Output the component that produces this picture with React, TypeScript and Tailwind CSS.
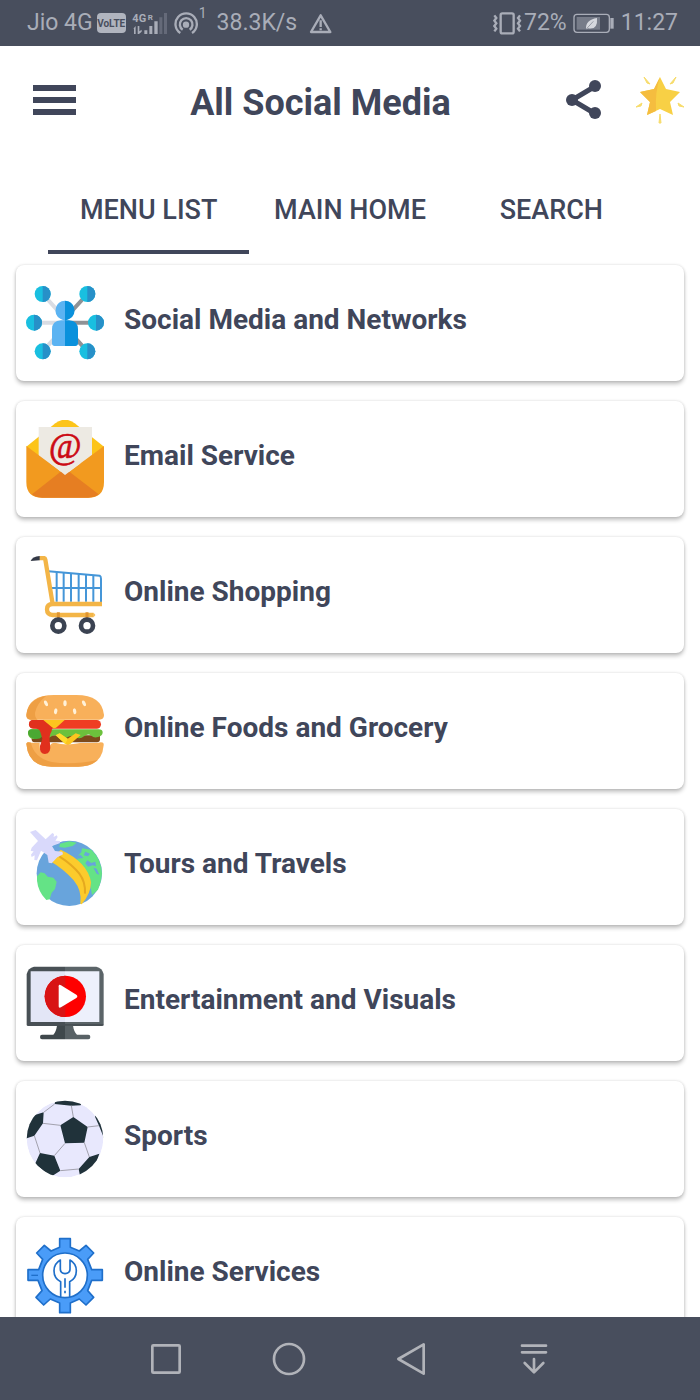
import type { ReactNode } from 'react';

const NetworkIcon = () => (
  <svg viewBox="48 72 234 234" className="size-[78px] shrink-0" aria-hidden="true">
    <g strokeWidth="12">
      <path d="M98 102 165 176M98 274 165 200M72 188H165" stroke="#d9dce3" />
      <path d="M232 102 165 176M232 274 165 200M165 188H258" stroke="#8f9296" />
    </g>
    {[[98, 102], [232, 102], [72, 188], [258, 188], [98, 274], [232, 274]].map(([x, y]) => (
      <g key={`${x}-${y}`}>
        <circle cx={x} cy={y} r="24" fill="#19bfe0" />
        <path d={`M${x} ${y - 24}a24 24 0 0 1 0 48z`} fill="#2790c8" />
      </g>
    ))}
    <path d="M165 122a29 29 0 0 0-14 54q9 5 14 5zM165 181h-12q-27 2-27 27v42q0 8 8 8h31z" fill="#5bb3f2" />
    <path d="M165 122a29 29 0 0 1 14 54q-9 5-14 5zM165 181h12q27 2 27 27v42q0 8-8 8h-31z" fill="#0a91dc" />
  </svg>
);

const MailIcon = () => (
  <svg viewBox="48 60 234 234" className="size-[78px] shrink-0" aria-hidden="true">
    <path d="M49 140 136 70q29-22 58 0l88 70-60 60H110z" fill="#fcc419" />
    <path d="M86 81h160v94l-66 43q-15 12-30 0l-64-43z" fill="#edeae3" />
    <path d="M49 138 165 224 282 138V246q0 47-47 47H96q-47 0-47-47z" fill="#f29a1f" />
    <path d="m66 283 84-66q15-11 30 0l86 66q-13 10-31 10H96q-18 0-30-10z" fill="#e67e22" />
    <path d="m140 205 25 20 27-20 20-15H120z" fill="#edeae3" />
    <text
      x="165"
      y="173"
      textAnchor="middle"
      fontSize="106"
      fill="#cc0a14"
      stroke="#cc0a14"
      strokeWidth="2"
      className="font-['Liberation_Serif',serif] italic"
    >
      @
    </text>
  </svg>
);

const CartIcon = () => (
  <svg viewBox="48 48 234 234" className="size-[78px] shrink-0" fill="none" aria-hidden="true">
    <g stroke="#4596d8" strokeWidth="6">
      <path d="M115 94l154 13q4 2 4 9v70" />
      <path d="M124 144h150M140 97v88M161 99v86M183 101v84M206 103v82M228 105v80M250 107v78" />
    </g>
    <path
      d="M88 54h12q5 0 6 5l22 133h148M128 192q-17 0-17 16t17 17h122"
      stroke="#f3b547"
      strokeWidth="13"
      strokeLinejoin="round"
    />
    <path d="M250 219q10 6 0 12z" fill="#f3b547" stroke="#f3b547" />
    <path d="M89 48v13l-27 2q5-13 27-15z" fill="#333946" />
    <path d="M145 217v22M231 217v22" stroke="#e0942f" strokeWidth="9" />
    <circle cx="145" cy="257" r="18" stroke="#3b4352" strokeWidth="14" />
    <circle cx="231" cy="257" r="18" stroke="#3b4352" strokeWidth="14" />
  </svg>
);

const BurgerIcon = () => (
  <svg viewBox="48 36 234 234" className="size-[78px] shrink-0" aria-hidden="true">
    <path d="M65 166h205v12q0 9-9 9H74q-9 0-9-9z" fill="#7d4a1b" />
    <rect x="57" y="120" width="216" height="26" rx="13" fill="#ef3d23" />
    <path
      d="M54 157q2-12 16-9h190q18-2 18 9t-14 14q-12 4-20-4-10-8-22 2-13 10-25 2-12-8-25 1-13 8-24-2-10-9-22-2-12 10-24 3-10-6-19 2-12 8-22 1-8-6-7-17z"
      fill="#6cc13c"
    />
    <path d="M54 157q2-12 16-9h22q8 2 4 22-8 9-24 6-18-5-18-19z" fill="#4aa832" />
    <path d="m137 166 12-6 24 16 24-16 15 5-31 27q-7 7-15 0z" fill="#fcc51f" />
    <path d="m137 166 12-6 24 16-7 16z" fill="#ffda2d" />
    <path
      d="M49 191q2-7 16-3h24v9q0 22 15 22t16-22q3-9 15-9 32 10 75 1 27 0 55-1 18-4 16 8-5 64-76 64h-80q-70 0-76-69z"
      fill="#f8b05a"
    />
    <path d="M49 191q2-7 14-3 8 44 62 58 60 10 138-6-22 20-58 20h-80q-70 0-76-69z" fill="#ee9f44" />
    <path d="M57 132q0-12 13-12h69v19q-14 2-14 14-10 17-5 38 5 30-15 31-17 0-15-24l7-22-6-20q-3-11-20-11-14 0-14-13z" fill="#e0301d" />
    <path d="M99 119h66l-25 23q-7 6-14 0z" fill="#fcc51f" />
    <path d="M49 105q5-60 83-60h67q77 0 83 60 0 14-14 14H62q-13 0-13-14z" fill="#f8b05a" />
    <path d="M49 105q4-47 60-58-28 22-34 51-1 15 8 21H62q-13 0-13-14z" fill="#ee9f44" />
    <g fill="#fff1d8">
      <ellipse cx="108" cy="70" rx="5" ry="9" transform="rotate(-25 108 70)" />
      <ellipse cx="165" cy="70" rx="5" ry="9" />
      <ellipse cx="222" cy="70" rx="5" ry="9" transform="rotate(-25 222 70)" />
      <ellipse cx="137" cy="94" rx="5" ry="9" transform="rotate(10 137 94)" />
      <ellipse cx="194" cy="94" rx="5" ry="9" transform="rotate(-10 194 94)" />
    </g>
  </svg>
);

const TravelIcon = () => (
  <svg viewBox="48 39 234 234" className="size-[78px] shrink-0" aria-hidden="true">
    <circle cx="178" cy="175" r="98" fill="#68a4dc" />
    <g fill="#64e386">
      <path d="m92 172 12 3 9 10 17 3 10 12-5 22-10 11-6 20-10 2-12-14q-18-26-16-57z" />
      <path d="m150 86 28-7 22 4-12 10-24 5-16-2zM216 100l28 4q30 28 32 72l-4 24-8 24-18 16-6-34-14-28-6-24-16-12-4-16 14-14z" />
    </g>
    <g fill="#68a4dc">
      <path d="m226 110 14 6-6 8-13-3zM232 136l12 8 12-4 2 14-10-3-14 4-8-10z" />
      <path d="m250 158 10 3 8 18-8-3zM200 122l12-2 8 9-18 2z" />
    </g>
    <path d="M120 138 152 104q82 38 91 98 0 34-28 66l-4-2q6-38-20-70-30-34-71-58z" fill="#fccb2c" />
    <path d="M148 124q40 26 60 52 19 25 17 60" fill="none" stroke="#e5a91f" strokeWidth="6" />
    <path
      d="m60 51 17-6 30 28 20-19 5 3-1 9 9-5 3 5-7 11 14 1-1 7-23 8 9 15 22 2 2 8-17 9-17 18-9-2-4-23-19-13-12 29-8-1 1-14-9 5-2-7 8-10-9-1 3-10 19-20z"
      fill="#d9d9fb"
    />
  </svg>
);

const VideoIcon = () => (
  <svg viewBox="48 42 234 234" className="size-[78px] shrink-0" aria-hidden="true">
    <path d="M50 222V72q4-18 22-22h93v172z" fill="#485055" />
    <path d="M165 50h94q18 4 22 22v150H165z" fill="#5b6468" />
    <path d="M50 222v3q0 3 5 3h221q5 0 5-3v-3z" fill="#485055" />
    <path d="M141 227h24v41H96q-6 0-6-7t6-7h34q8-8 11-27z" fill="#3f484c" />
    <path d="M165 227h24q3 19 12 27h34q6 0 6 7t-6 7h-70z" fill="#586165" />
    <path d="M62 64h103v152H62z" fill="#e3e6f6" />
    <path d="M165 64h103v152H165z" fill="#edf0fc" />
    <circle cx="166" cy="139" r="62" fill="#fe0000" />
    <path d="M166 77a62 62 0 0 0 0 124z" fill="#d81414" />
    <path d="M146 109q0-7 7-3l46 28q6 5 0 10l-46 28q-7 4-7-3z" fill="#fff" />
  </svg>
);

const BallIcon = () => (
  <svg viewBox="48 45 234 234" className="size-[78px] shrink-0" aria-hidden="true">
    <defs>
      <clipPath id="ball">
        <circle cx="165" cy="162" r="115" />
      </clipPath>
    </defs>
    <g clipPath="url(#ball)">
      <circle cx="165" cy="162" r="115" fill="#e8e8fd" />
      <g fill="#20323a">
        <path d="m190 96 43 30-10 47-58 2-14-54zM90 204l43 8 18 45-28 18-48-38z" />
        <path d="m101 82-2 33-26 37-30 10 5-64zM134 57l50 5 28-1 10-26h-84zM255 95l12 27 16 40 10-62-30-30zM238 216l30-10-14 40-44 26-4-20z" />
      </g>
      <path
        d="m101 82 33-25M99 115l52 6M190 96l-6-34M233 126l34-4M165 175l-32 37M223 173l15 43M73 152l17 52M151 257l55-5"
        stroke="#a2a1ad"
        strokeWidth="3"
        fill="none"
      />
    </g>
  </svg>
);

const GearIcon = () => (
  <svg viewBox="48 63 234 234" className="size-[78px] shrink-0" aria-hidden="true">
    <path
      d="M149 71h32v26l27 11 20-17 23 23-18 19 12 31h32v32h-32l-12 31 18 20-23 23-20-18-27 12v29h-32v-29l-28-12-20 18-23-23 18-20-12-31H54v-32h32l12-31-18-19 23-23 20 17 26-11z"
      fill="#4a9cf8"
      stroke="#1f6fca"
      strokeWidth="5"
      strokeLinejoin="round"
    />
    <circle cx="165" cy="181" r="67" fill="#fff" stroke="#1f6fca" strokeWidth="5" />
    <path d="M64 181h20" stroke="#1f6fca" strokeWidth="4" />
    <path
      d="M152 246v-46q-20-10-20-33 0-21 19-32v28q0 11 14 13 15-2 15-13v-28q19 11 19 32 0 23-20 33v46M165 190v28M165 227v8"
      fill="none"
      stroke="#1f6fca"
      strokeWidth="5"
      strokeLinejoin="round"
    />
  </svg>
);

const StatusBar = () => (
  <div className="flex h-[46px] shrink-0 items-center justify-between bg-[#484e5d] pr-[22px] pl-[27px] text-[23px] text-[#a9adb8]">
    <div className="flex items-center">
      <span>Jio 4G</span>
      <span className="ml-1 flex h-5 w-[29px] items-center justify-center rounded-sm bg-[#b0b4be] text-[10px] font-bold text-[#484e5d]">
        VoLTE
      </span>
      <svg viewBox="396 36 108 69" className="ml-1.5 h-[23px] w-9" fill="currentColor" aria-hidden="true">
        <text x="397" y="66" fontSize="33" fontWeight="bold">4G</text>
        <text x="443" y="60" fontSize="24" fontWeight="bold">R</text>
        <path d="M400 86l7-8v24h-5V86zM413 78h5v16l7-5v6l-8 7h-4zM433 91h9v11h-9zM448 78h9v24h-9zM463 64h10v38h-10z" />
        <path d="M478 52h9v50h-9zM492 39h9v63h-9z" opacity=".3" />
      </svg>
      <svg viewBox="525 36 75 69" className="ml-1.5 h-[23px] w-[25px]" fill="none" stroke="currentColor" strokeWidth="7" aria-hidden="true">
        <path d="M544 99a32 32 0 1 1 35 0" />
        <path d="M551 89a19 19 0 1 1 21 0" />
        <circle cx="561" cy="74" r="6" fill="currentColor" />
      </svg>
      <span className="self-start text-sm leading-none">1</span>
      <span className="ml-2.5">38.3K/s</span>
      <svg viewBox="928 42 69 63" className="ml-3 h-[21px] w-[23px]" fill="none" stroke="currentColor" strokeWidth="7" aria-hidden="true">
        <path d="M963 49 992 99H934zM963 64v20M963 88v6" strokeLinejoin="round" />
      </svg>
    </div>
    <div className="flex items-center">
      <svg viewBox="430 36 87 69" className="h-[23px] w-[29px]" fill="none" stroke="currentColor" strokeWidth="7" aria-hidden="true">
        <rect x="453" y="40" width="39" height="60" rx="5" />
        <path d="m434 46 6 8-6 8 6 8-6 8 6 8-6 8M511 46l-6 8 6 8-6 8 6 8-6 8 6 8" />
      </svg>
      <span className="ml-0.5">72%</span>
      <svg viewBox="669 39 126 63" className="ml-1.5 h-[21px] w-[42px]" aria-hidden="true">
        <rect x="672" y="43" width="106" height="54" rx="9" fill="none" stroke="currentColor" strokeWidth="4" />
        <path d="M680 51h70v38h-70z" fill="#777c89" />
        <path d="M781 54h10v32h-10z" fill="currentColor" />
        <path d="M708 88q-2-28 33-34 3 36-26 31z" fill="#d6d8de" />
        <path d="m708 88 22-24" stroke="#777c89" strokeWidth="2" />
      </svg>
      <span className="ml-1.5">11:27</span>
    </div>
  </div>
);

const Header = () => (
  <header className="flex h-27 shrink-0 items-center pr-4 pl-[33px]">
    <button type="button" aria-label="Open menu" className="flex w-[43px] flex-col gap-1.5">
      <span className="h-1.5 w-full bg-current" />
      <span className="h-1.5 w-full bg-current" />
      <span className="h-1.5 w-full bg-current" />
    </button>
    <h1 className="flex-1 pt-1.5 text-center text-4xl font-bold">All Social Media</h1>
    <button type="button" aria-label="Share">
      <svg viewBox="565 80 37 40" className="h-10 w-[37px]" aria-hidden="true">
        <path d="m594 87-22 13 22 13" fill="none" stroke="currentColor" strokeWidth="5" />
        <g fill="currentColor">
          <circle cx="595" cy="86" r="6" />
          <circle cx="572" cy="100" r="6" />
          <circle cx="595" cy="113" r="6" />
        </g>
      </svg>
    </button>
    <button type="button" aria-label="Rate this app" className="ml-[34px]">
      <svg viewBox="636 76 48 48" className="size-12" aria-hidden="true">
        <path d="m660 77 6 12 14 3-10 10 3 13-13-6-13 6 3-13-10-10 14-3z" fill="#f8d045" />
        <path d="m660 77-6 12-14 3 10 10-3 13 9-4q-1-20 4-34z" fill="#f5bd3f" />
        <path
          d="m644 77 6 7-3-1zM676 77l-6 7 3-1zM636 107l6-4-1 3zM684 107l-6-4 1 3zM660 114l1 9h-2z"
          fill="#f7dc6b"
          stroke="#f7dc6b"
          strokeWidth="1"
        />
      </svg>
    </button>
  </header>
);

const Tab = ({ label, active }: { label: string; active?: boolean }) => (
  <button
    type="button"
    role="tab"
    aria-selected={!!active}
    className={`flex-1 border-b-4 pt-1 text-[27px] font-medium whitespace-nowrap ${
      active ? 'border-[#40465a]' : 'border-transparent'
    }`}
  >
    {label}
  </button>
);

const Card = ({ icon, title }: { icon: ReactNode; title: string }) => (
  <li>
    <a
      href="#"
      className="flex items-center gap-5 rounded-lg bg-white px-2.5 py-[19px] shadow-[0_3px_4px_rgba(0,0,0,0.24),0_0_3px_rgba(0,0,0,0.14)]"
    >
      {icon}
      <span className="pb-1.5 text-[28px] font-bold">{title}</span>
    </a>
  </li>
);

const NavButton = ({ label, children }: { label: string; children: ReactNode }) => (
  <button type="button" aria-label={label} className="flex flex-1 justify-center">
    <svg
      viewBox="-54 -54 108 108"
      className="size-9"
      fill="none"
      stroke="currentColor"
      strokeWidth="8"
      strokeLinecap="round"
      strokeLinejoin="round"
      aria-hidden="true"
    >
      {children}
    </svg>
  </button>
);

const categories = [
  { title: 'Social Media and Networks', icon: <NetworkIcon /> },
  { title: 'Email Service', icon: <MailIcon /> },
  { title: 'Online Shopping', icon: <CartIcon /> },
  { title: 'Online Foods and Grocery', icon: <BurgerIcon /> },
  { title: 'Tours and Travels', icon: <TravelIcon /> },
  { title: 'Entertainment and Visuals', icon: <VideoIcon /> },
  { title: 'Sports', icon: <BallIcon /> },
  { title: 'Online Services', icon: <GearIcon /> },
];

const App = () => {
  return (
    <div className="flex h-screen flex-col bg-white font-[Roboto,sans-serif] text-[#40465a]">
      <StatusBar />
      <Header />
      <div role="tablist" className="mt-3 flex h-22 shrink-0 px-12">
        <Tab label="MENU LIST" active />
        <Tab label="MAIN HOME" />
        <Tab label="SEARCH" />
      </div>
      <main className="min-h-0 flex-1 overflow-y-auto px-4 pt-[11px] [scrollbar-width:none]">
        <ul className="flex flex-col gap-5">
          {categories.map((category) => (
            <Card key={category.title} icon={category.icon} title={category.title} />
          ))}
        </ul>
      </main>
      <nav className="flex h-[83px] shrink-0 items-center bg-[#484e5d] px-[15%] text-[#b1b3b9]">
        <NavButton label="Recent apps">
          <rect x="-41" y="-41" width="82" height="82" rx="3" />
        </NavButton>
        <NavButton label="Home">
          <circle r="45" />
        </NavButton>
        <NavButton label="Back">
          <path d="M38-44V44L-38 0z" />
        </NavButton>
        <NavButton label="Hide navigation bar">
          <path d="M-36-40h72M-36-20h72M0 0v40M-28 12 0 40 28 12" />
        </NavButton>
      </nav>
    </div>
  );
};

export default App;
